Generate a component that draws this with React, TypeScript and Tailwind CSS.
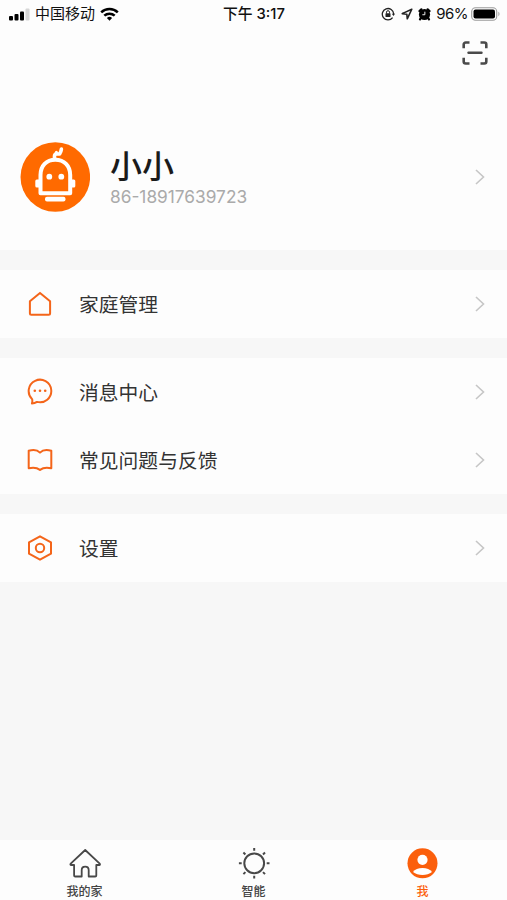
import React from 'react';

interface MenuItem {
  label: string;
  icon: React.ReactNode;
}

const HomeLineIcon = () => (
  <svg width="28" height="28" viewBox="0 0 28 28" fill="none" stroke="#f4651a" strokeWidth="2" strokeLinejoin="round">
    <path d="M3.9 11.3 14 2.9l10.1 8.4v12c0 .9-.6 1.5-1.5 1.5H5.4c-.9 0-1.5-.6-1.5-1.5z" />
  </svg>
);

const MessageIcon = () => (
  <svg width="28" height="28" viewBox="0 0 28 28" fill="none" stroke="#f4651a" strokeWidth="2" strokeLinejoin="round">
    <path d="M6.1 21.1A11.3 11.3 0 1 1 11 23.9Q8.7 25.4 5.9 25.5Q6.7 23.1 6.1 21.1z" />
    <g fill="#f4651a" stroke="none">
      <circle cx="8.8" cy="12.8" r="1.3" />
      <circle cx="14" cy="12.8" r="1.3" />
      <circle cx="19.2" cy="12.8" r="1.3" />
    </g>
  </svg>
);

const BookIcon = () => (
  <svg width="28" height="28" viewBox="0 0 28 28" fill="none" stroke="#f4651a" strokeWidth="2" strokeLinejoin="round">
    <path d="M14 6.6C11.5 4 7 3.5 2.7 4.8V22.3C7 21.2 11 21.6 14 23.9C17 21.6 21 21.2 25.3 22.3V4.8C21 3.5 16.5 4 14 6.6z" />
  </svg>
);

const SettingsIcon = () => (
  <svg width="28" height="28" viewBox="0 0 28 28" fill="none" stroke="#f4651a" strokeWidth="2" strokeLinejoin="round">
    <path d="M14 2.3 25 8.3v11.4L14 25.7 3 19.7V8.3z" />
    <circle cx="14" cy="14" r="4.2" />
  </svg>
);

const Chevron = () => (
  <svg width="12" height="18" viewBox="0 0 12 18" fill="none" stroke="#c6c6c6" strokeWidth="1.6">
    <path d="M2 2 9.5 9 2 16" />
  </svg>
);

const menuGroups: MenuItem[][] = [
  [{ label: '家庭管理', icon: <HomeLineIcon /> }],
  [
    { label: '消息中心', icon: <MessageIcon /> },
    { label: '常见问题与反馈', icon: <BookIcon /> },
  ],
  [{ label: '设置', icon: <SettingsIcon /> }],
];

const StatusBar: React.FC = () => (
  <div className="grid h-7 grid-cols-3 items-center pb-px pl-[9px] pr-[6px] text-[#111]">
    <div className="flex items-center">
      <svg width="22" height="14" viewBox="0 0 22 14">
        <rect x="0" y="9" width="4" height="4.5" rx="1" />
        <rect x="5.5" y="7" width="4" height="6.5" rx="1" />
        <rect x="11" y="4.5" width="4" height="9" rx="1" />
        <rect x="16.5" y="1.5" width="4" height="12" rx="1" fill="#d6d6d6" />
      </svg>
      <span className="ml-1 text-[15px] leading-none">中国移动</span>
      <svg className="ml-[5px]" width="19" height="14" viewBox="0 0 19 14" fill="none" stroke="#000" strokeWidth="2.5">
        <path d="M1.2 5.4a12 12 0 0 1 16.6 0" />
        <path d="M4.3 8.7a7.6 7.6 0 0 1 10.4 0" />
        <path d="M9.5 13.7 6.9 11.1a3.7 3.7 0 0 1 5.2 0z" fill="#000" stroke="none" />
      </svg>
    </div>
    <div className="pr-[2px] pt-px text-center text-[14.8px] font-medium leading-none">下午 3:17</div>
    <div className="flex items-center justify-end">
      <svg width="14" height="14" viewBox="0 0 14 14" fill="none" stroke="#222" strokeWidth="1.3">
        <path d="M11.6 10.6a5.7 5.7 0 1 1 1.1-3.6" />
        <path d="M10.8 6.7h3.2l-1.5 2.2z" fill="#222" stroke="none" />
        <rect x="4.5" y="6.3" width="5" height="3.7" rx=".5" fill="#222" stroke="none" />
        <path d="M5.5 6.5V5.2a1.5 1.5 0 0 1 3 0v1.3" strokeWidth="1" />
      </svg>
      <svg className="ml-[6px]" width="12" height="12" viewBox="0 0 13 13" fill="none" stroke="#222" strokeWidth="1.7" strokeLinejoin="round">
        <path d="M11.7 1.3 1.3 6.1l5 .6.5 5z" />
      </svg>
      <svg className="ml-[5px]" width="13" height="14" viewBox="0 0 14 14">
        <circle cx="7" cy="7.5" r="6" />
        <path d="M1.6 3.8 3.6 2M12.4 3.8l-2-1.8M3 11.5l-.8 1.3M11 11.5l.8 1.3" stroke="#000" strokeWidth="2.4" strokeLinecap="round" />
        <path d="M7.4 4.5v3.3H4.7" fill="none" stroke="#fff" strokeWidth="1" />
      </svg>
      <span className="ml-[5px] text-[15px] leading-none tracking-[-0.5px]">96%</span>
      <svg className="ml-[3px]" width="30" height="14" viewBox="0 0 30 14">
        <rect x=".7" y=".7" width="25" height="12.6" rx="3.8" fill="none" stroke="#9b9b9b" strokeWidth="1.1" />
        <rect x="2.5" y="2.5" width="21.5" height="9" rx="2" />
        <path d="M27.3 4.8c1.6.5 1.6 3.900 0 4.400z" fill="#aaa" />
      </svg>
    </div>
  </div>
);

const Avatar = () => (
  <svg width="70" height="70" viewBox="0 0 70 70" fill="none">
    <circle cx="35.3" cy="35" r="34.8" fill="#ff6a00" />
    <g stroke="#fff" strokeWidth="4" strokeLinejoin="round">
      <path d="M20.5 51.2V33c0-9.5 6-15.3 14.8-15.3S50.2 23.5 50.2 33v18.2z" />
      <path d="M34.8 17c-.8-3.200 0-4.600 1-5h3.800c1-1.500 1.600-3.200 1.800-5" strokeWidth="3.600" strokeLinecap="round" />
      <path d="M36.400 10.200v1.500" strokeWidth="3" strokeLinecap="round" />
    </g>
    <g fill="#fff">
      <rect x="15.3" y="37.5" width="5" height="8" rx="1.5" />
      <rect x="50.3" y="37.5" width="5" height="8" rx="1.5" />
      <rect x="25" y="54.8" width="20.5" height="4.7" rx="2" />
      <circle cx="29.3" cy="34.7" r="2.9" />
      <circle cx="41.3" cy="34.7" r="2.9" />
    </g>
  </svg>
);

const TabBar: React.FC = () => (
  <nav className="mt-auto grid h-[60px] grid-cols-3 bg-[#fdfdfd] pt-[7px] text-[12px] font-medium leading-[14px] text-[#444]">
    <div className="flex flex-col items-center">
      <svg width="34" height="32" viewBox="0 0 34 32" fill="none" stroke="#484848" strokeWidth="1.8" strokeLinejoin="round">
        <path d="M17.2 3 31.7 16.700c.6.600.3 1.300-.5 1.300h-2.900v10.400c0 .7-.4 1.100-1.100 1.100h-6.500v-6.300c0-2.200-1.300-3.500-3.500-3.500s-3.500 1.300-3.500 3.500v6.300H7.200c-.7 0-1.100-.4-1.100-1.100V18H3.200c-.8 0-1.100-.7-.5-1.300z" />
      </svg>
      <span className="mt-[6px]">我的家</span>
    </div>
    <div className="flex flex-col items-center">
      <svg width="34" height="32" viewBox="0 0 34 32" fill="none" stroke="#484848" strokeWidth="2">
        <circle cx="17.2" cy="16.3" r="9.9" />
        <path d="M17.2 1v2.800M17.2 28.800v2.800M1.900 16.300h2.800M29.700 16.300h2.800M6.400 5.500l2 2M26 25.100l2 2M6.400 27.100l2-2M26 7.500l2-2" />
      </svg>
      <span className="mt-[6px]">智能</span>
    </div>
    <div className="flex flex-col items-center text-[#fb5f0c]">
      <svg width="34" height="32" viewBox="0 0 34 32">
        <circle cx="16.5" cy="16.3" r="15" fill="#fb5f0c" />
        <circle cx="16.5" cy="12.8" r="5.1" fill="#fff" />
        <path d="M7 25C8.8 22.3 12.3 21 16.5 21s7.700 1.300 9.500 4c-2.500 2-5.900 3-9.500 3s-7-1-9.500-3z" fill="#fff" />
      </svg>
      <span className="mt-[6px]">我</span>
    </div>
  </nav>
);

const App: React.FC = () => {
  return (
    <div className="flex h-[900px] w-[507px] flex-col overflow-hidden bg-[#f7f7f7] font-['Inter','Noto_Sans_CJK_SC',sans-serif]">
      <header className="flex h-[250px] flex-col bg-[#fdfdfd]">
        <StatusBar />
        <div className="flex justify-end pr-[18px] pt-3">
          <svg width="28" height="26" viewBox="0 0 28 26" fill="none" stroke="#4a4a4a" strokeWidth="2.6" strokeLinejoin="round">
            <path d="M2.7 8.3V4.5a2 2 0 0 1 2-2H8.5M19.5 2.5h3.8a2 2 0 0 1 2 2V8.3M25.3 17.7v3.800a2 2 0 0 1-2 2H19.5M8.500 23.500H4.700a2 2 0 0 1-2-2V17.700" />
            <path d="M7.5 12.8h13" strokeLinecap="round" strokeWidth="2.4" />
          </svg>
        </div>
        <div className="mt-[76px] flex items-center pl-5 pr-[21px]">
          <Avatar />
          <div className="ml-5 flex flex-1 flex-col pt-[2px]">
            <span className="text-[32px] font-medium leading-9 text-[#1a1a1a]">小小</span>
            <span className="mt-[2px] text-[17.3px] leading-5 text-[#aaa]">86-18917639723</span>
          </div>
          <Chevron />
        </div>
      </header>

      <main className="mt-5 flex flex-col gap-5">
        {menuGroups.map((group, i) => (
          <section key={i} className="bg-[#fdfdfd]">
            {group.map((item) => (
              <div key={item.label} className="flex h-[68px] items-center pl-[26px] pr-[21px]">
                {item.icon}
                <span className="ml-[25px] flex-1 pt-[2px] text-[19.8px] leading-7 text-[#333]">{item.label}</span>
                <Chevron />
              </div>
            ))}
          </section>
        ))}
      </main>

      <TabBar />
    </div>
  );
};

export default App;
